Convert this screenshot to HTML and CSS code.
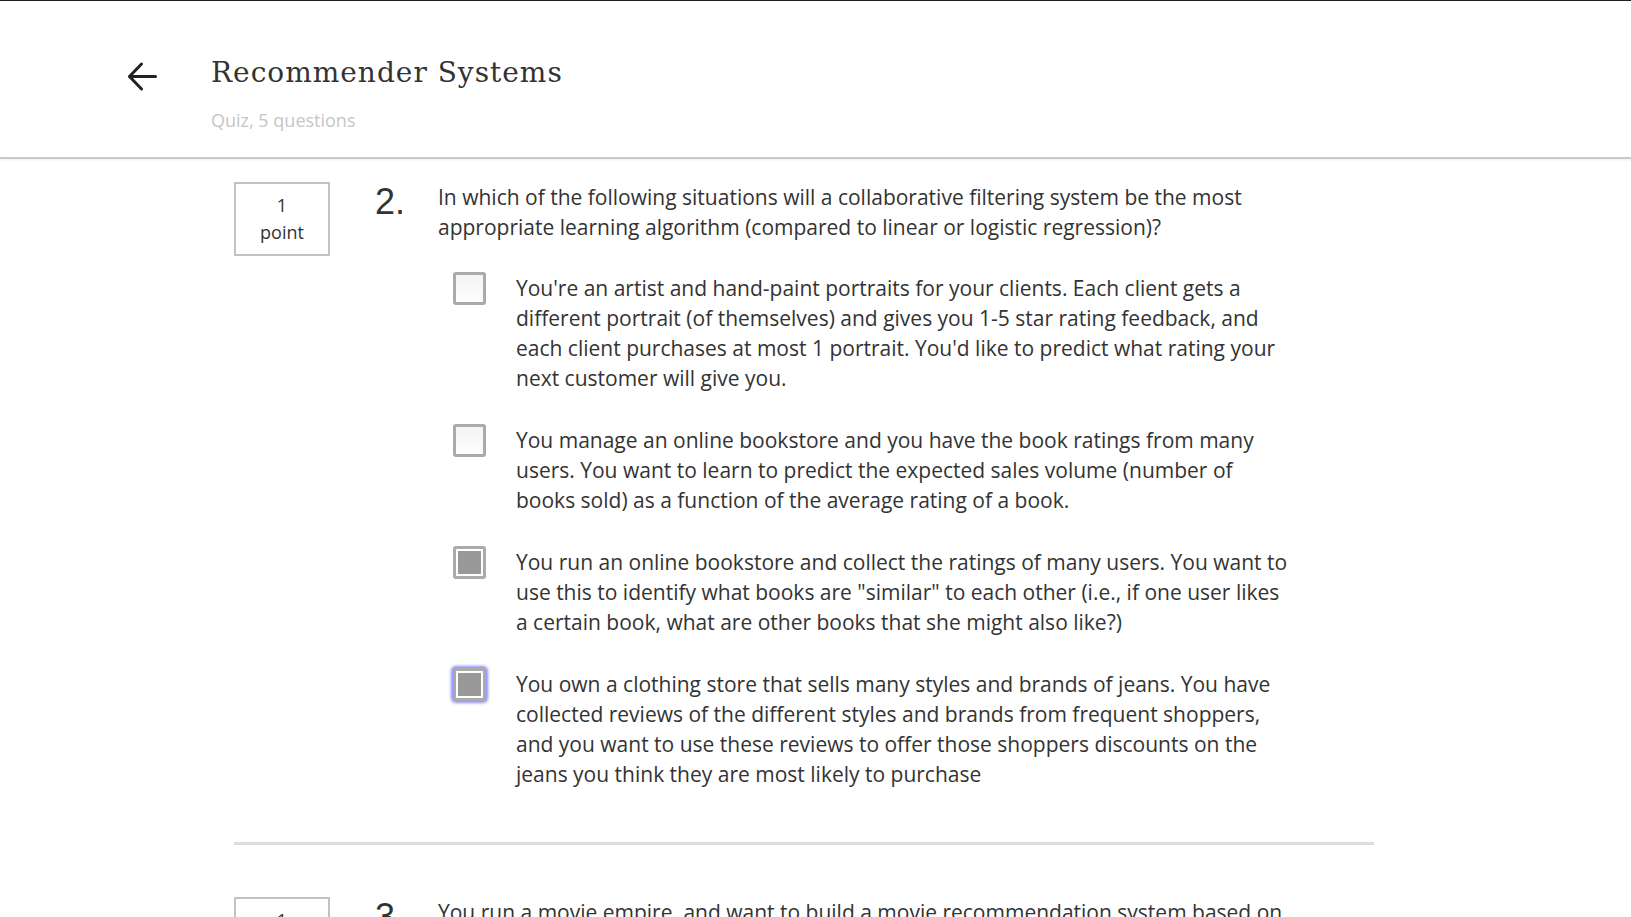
FILE: index.html
```html
<!DOCTYPE html>
<html lang="en">
<head>
<meta charset="utf-8">
<title>Recommender Systems</title>
<link rel="stylesheet" href="styles.css">
</head>
<body>
<header class="header">
  <a class="back" href="#" aria-label="Back">
    <svg width="30" height="30" viewBox="0 0 30 30" fill="none" stroke="#222" stroke-width="3" stroke-linecap="round" stroke-linejoin="round">
      <path d="M28.5 14.5 H3"/>
      <path d="M14.5 2 L2.5 14.5 L14.5 27"/>
    </svg>
  </a>
  <div class="titles">
    <h1 class="title">Recommender Systems</h1>
    <div class="subtitle">Quiz, 5 questions</div>
  </div>
</header>

<main class="main">
  <section class="question">
    <div class="points"><span>1</span><span>point</span></div>
    <div class="qnum">2.</div>
    <div class="qbody">
      <p class="qtext">In which of the following situations will a collaborative filtering system be the most appropriate learning algorithm (compared to linear or logistic regression)?</p>
      <div class="options">
        <label class="option">
          <span class="check"></span>
          <span class="otext">You're an artist and hand-paint portraits for your clients. Each client gets a different portrait (of themselves) and gives you 1-5 star rating feedback, and each client purchases at most 1 portrait. You'd like to predict what rating your next customer will give you.</span>
        </label>
        <label class="option">
          <span class="check"></span>
          <span class="otext">You manage an online bookstore and you have the book ratings from many users. You want to learn to predict the expected sales volume (number of books sold) as a function of the average rating of a book.</span>
        </label>
        <label class="option">
          <span class="check checked"></span>
          <span class="otext">You run an online bookstore and collect the ratings of many users. You want to use this to identify what books are "similar" to each other (i.e., if one user likes a certain book, what are other books that she might also like?)</span>
        </label>
        <label class="option">
          <span class="check checked focused"></span>
          <span class="otext">You own a clothing store that sells many styles and brands of jeans. You have collected reviews of the different styles and brands from frequent shoppers, and you want to use these reviews to offer those shoppers discounts on the jeans you think they are most likely to purchase</span>
        </label>
      </div>
    </div>
  </section>

  <hr class="sep">

  <section class="question">
    <div class="points"><span>1</span><span>point</span></div>
    <div class="qnum">3.</div>
    <div class="qbody">
      <p class="qtext">You run a movie empire, and want to build a movie recommendation system based on collaborative filtering. There were three popular review websites (which we'll call A, B and C) which users to go to rate movies, and you have just acquired all three companies that run these websites.</p>
    </div>
  </section>
</main>
</body>
</html>
```

FILE: styles.css
```css
html, body {
  margin: 0;
  padding: 0;
  background: #fff;
}

body {
  font-family: "Open Sans", "Liberation Sans", sans-serif;
  color: #333;
  border-top: 1px solid #1e1e1e;
  overflow: hidden;
}

.header {
  display: flex;
  align-items: flex-start;
  padding: 54px 0 24px 127px;
  border-bottom: 2px solid #c9c9c9;
  box-shadow: 0 1px 2px rgba(0, 0, 0, 0.08);
}

.back {
  display: block;
  width: 30px;
  height: 30px;
  margin-top: 7px;
  margin-right: 54px;
}

.back svg {
  display: block;
}

.titles {
  display: flex;
  flex-direction: column;
}

.title {
  margin: 0;
  font-family: "DejaVu Serif", "Liberation Serif", serif;
  font-weight: normal;
  font-size: 28px;
  line-height: 36px;
  letter-spacing: 1px;
  color: #333;
}

.subtitle {
  margin-top: 17px;
  font-size: 18px;
  line-height: 25px;
  color: #c6c6c6;
}

.main {
  padding: 23px 0 0 234px;
}

.question {
  display: flex;
  align-items: flex-start;
}

.points {
  box-sizing: border-box;
  width: 96px;
  height: 74px;
  padding-top: 8px;
  border: 2px solid #c2c2c2;
  display: flex;
  flex-direction: column;
  align-items: center;
  font-size: 18px;
  line-height: 27px;
  color: #333;
  flex: none;
}

.qnum {
  width: 63px;
  margin-left: 45px;
  font-family: "Liberation Sans", Arial, sans-serif;
  font-size: 36px;
  line-height: 40px;
  color: #333;
  flex: none;
}

.qbody {
  width: 860px;
}

.qtext {
  margin: 0;
  font-size: 21px;
  line-height: 30px;
}

.options {
  margin-top: 31px;
}

.option {
  display: flex;
  align-items: flex-start;
  padding-left: 15px;
  margin-bottom: 32px;
}

.check {
  box-sizing: border-box;
  flex: none;
  width: 33px;
  height: 33px;
  margin-top: -1px;
  margin-right: 30px;
  border: 3px solid #aaa;
  border-radius: 3px;
  background: linear-gradient(#f4f4f4, #fdfdfd);
}

.check.checked {
  background: #999;
  box-shadow: inset 0 0 0 2px #fff;
}

.check.focused {
  box-shadow: inset 0 0 0 2px #fff, 0 0 3px 2px #8c8cff;
}

.otext {
  font-size: 21px;
  line-height: 30px;
  width: 774px;
}

.sep {
  width: 1140px;
  height: 3px;
  margin: 21px 0 52px 0;
  border: 0;
  background: #ddd;
}
```
